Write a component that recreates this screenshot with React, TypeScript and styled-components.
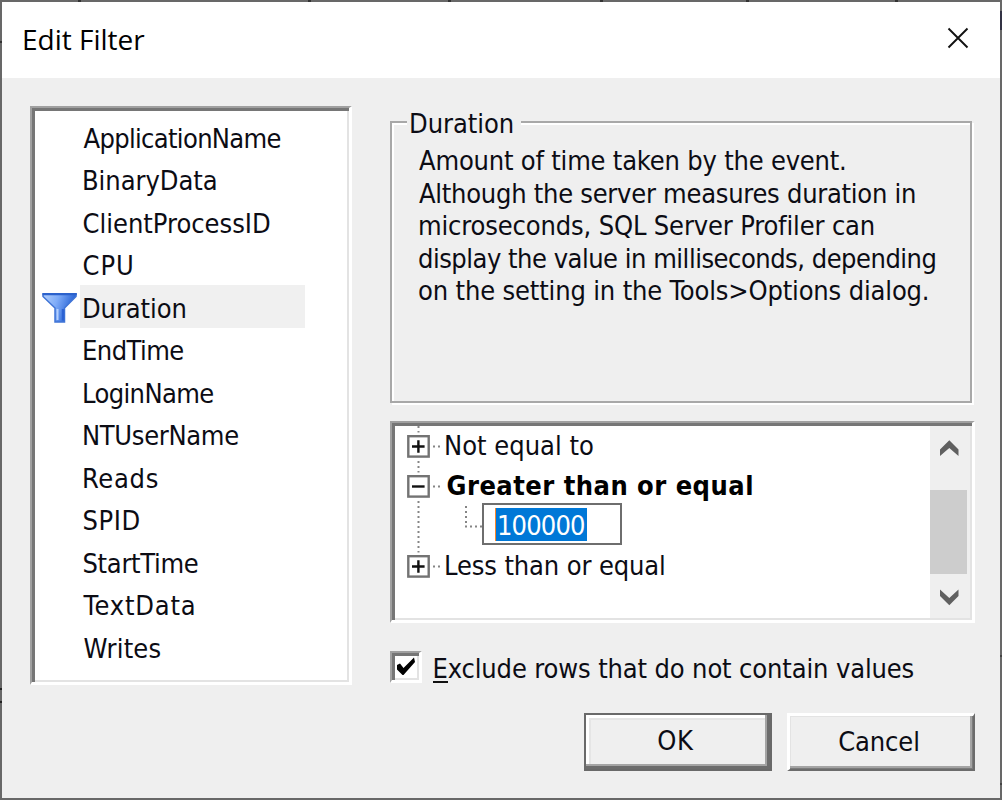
import React from "react";
import styled, { createGlobalStyle } from "styled-components";

const uiFont = '"DejaVu Sans Condensed", "DejaVu Sans", sans-serif';
const face = "#efefef";

const GlobalStyle = createGlobalStyle`
  * { box-sizing: border-box; }
  body { margin: 0; overflow: hidden; }
`;

const Backdrop = styled.div`
  width: 1002px;
  height: 800px;
  padding: 2px;
  background:
    linear-gradient(#333, #333) 78px 0 / 3px 2px no-repeat,
    linear-gradient(#333, #333) 308px 0 / 3px 2px no-repeat,
    linear-gradient(#333, #333) 448px 0 / 3px 2px no-repeat,
    linear-gradient(#333, #333) 600px 0 / 3px 2px no-repeat,
    linear-gradient(#333, #333) 746px 0 / 3px 2px no-repeat,
    linear-gradient(#333, #333) 895px 0 / 3px 2px no-repeat,
    linear-gradient(#333, #333) 0 41px / 2px 2px no-repeat,
    linear-gradient(#222, #222) 0 688px / 2px 2px no-repeat,
    linear-gradient(#222, #222) 0 701px / 2px 2px no-repeat,
    linear-gradient(#334, #334) 1000px 11px / 2px 19px no-repeat,
    linear-gradient(#444, #444) 1000px 655px / 2px 2px no-repeat,
    linear-gradient(#444, #444) 1000px 783px / 2px 2px no-repeat,
    #686868;
`;

const Dialog = styled.div`
  display: flex;
  flex-direction: column;
  width: 998px;
  height: 796px;
  background: ${face};
  color: #0c0c14;
  font: 27px ${uiFont};
  white-space: nowrap;
`;

const TitleBar = styled.header`
  display: flex;
  justify-content: space-between;
  align-items: center;
  height: 76px;
  padding: 0 31px 0 20px;
  background: #fff;
`;

const Title = styled.h1`
  margin: 0;
  font: 400 28px/74px "Open Sans", sans-serif;
  height: 76px;
  color: #000;
`;

const CloseButton = styled.button`
  display: flex;
  width: 22px;
  height: 22px;
  margin-bottom: 4px;
  padding: 0;
  border: 0;
  background: none;
`;

const Body = styled.div`
  display: flex;
  gap: 38px;
  padding: 28px 0 0 28px;
`;

const sunken = `
  border: solid;
  border-width: 2px 3px 3px 2px;
  border-color: #a0a0a0 #fff #fff #a0a0a0;
  box-shadow: inset 3px 3px 0 #767676, inset -2px -2px 0 #e3e3e3;
  background: #fff;
`;

const ListBox = styled.ul`
  ${sunken}
  width: 322px;
  height: 579px;
  margin: 0;
  padding: 7px 0 0 10px;
  list-style: none;
`;

const ListItem = styled.li`
  display: grid;
  grid-template-columns: 38px 225px;
  grid-template-rows: 42.5px;
  height: 42.5px;
`;

const IconCell = styled.span`
  padding-top: 7px;
`;

const ItemLabel = styled.span<{ $selected?: boolean; $indent: number; $tracking: number }>`
  height: 42.5px;
  padding: 2.7px 0 0 ${(p) => p.$indent}px;
  line-height: 41px;
  letter-spacing: ${(p) => p.$tracking}px;
  background: ${(p) => (p.$selected ? "#f0f0f0" : "transparent")};
`;

const Right = styled.div`
  display: flex;
  flex-direction: column;
  width: 585px;
`;

const Group = styled.section`
  display: flex;
  flex-direction: column;
  width: 582px;
  height: 282px;
  margin-top: 15px;
  border: 2px solid #a8a8a8;
  box-shadow: 2px 2px 0 #fff, inset 2px 2px 0 #fff;
`;

const Legend = styled.h2`
  align-self: flex-start;
  height: 32px;
  margin: -16px 0 0 15px;
  padding: 0 7px 0 2px;
  background: ${face};
  font: 400 27px/34px ${uiFont};
  letter-spacing: -0.05px;
`;

const Description = styled.p`
  margin: 6px 0 0 26px;
`;

const Line = styled.span<{ $indent?: number; $tracking: number }>`
  display: block;
  height: 32.5px;
  line-height: 32.5px;
  padding-left: ${(p) => p.$indent ?? 0}px;
  letter-spacing: ${(p) => p.$tracking}px;
`;

const TreeBox = styled.div`
  ${sunken}
  display: flex;
  justify-content: space-between;
  height: 202px;
  margin-top: 18px;
  padding: 3px 2px 2px 3px;
`;

const Tree = styled.div`
  display: flex;
  flex-direction: column;
`;

const TreeRow = styled.div`
  display: flex;
  height: 40px;
`;

const TreeLabel = styled.span<{ $bold?: boolean; $tracking?: number }>`
  line-height: 39px;
  padding-left: ${(p) => (p.$bold ? 2.5 : 0)}px;
  font-weight: ${(p) => (p.$bold ? 700 : 400)};
  letter-spacing: ${(p) => p.$tracking ?? 0}px;
  color: ${(p) => (p.$bold ? "#000" : "inherit")};
`;

const ValueField = styled.div`
  width: 140px;
  height: 42px;
  margin-top: -3px;
  padding: 3px 0 0 11px;
  border: 2px solid #6e6e6e;
  background: #fff;
`;

const SelectedText = styled.span`
  display: block;
  width: 92px;
  height: 33px;
  padding-left: 1px;
  border-left: 1px solid #ff8728;
  background: #0078d7;
  color: #fff;
  line-height: 36px;
  letter-spacing: -0.85px;
`;

const ScrollBar = styled.div`
  display: flex;
  flex-direction: column;
  width: 40px;
  background: ${face};
`;

const ScrollArrow = styled.div<{ $down?: boolean }>`
  display: flex;
  height: 44px;
  padding: ${(p) => (p.$down ? 15 : 14)}px 0 0 9.5px;
`;

const ScrollTrack = styled.div`
  height: 20.5px;
`;

const Thumb = styled.div`
  width: 37px;
  height: 85px;
  background: #cdcdcd;
`;

const CheckRow = styled.label`
  display: flex;
  margin-top: 28px;
  height: 32px;
`;

const CheckBox = styled.span`
  ${sunken}
  display: flex;
  flex-shrink: 0;
  width: 32px;
  height: 32px;
`;

const CheckLabel = styled.span`
  margin-left: 10.5px;
  line-height: 36px;
  letter-spacing: -0.13px;
`;

const Mnemonic = styled.span`
  display: inline-block;
  height: 32px;
  border-bottom: 2px solid #111;
`;

const Actions = styled.div`
  display: flex;
  justify-content: flex-end;
  gap: 15px;
  margin-top: 30px;
`;

const Button = styled.button<{ $primary?: boolean }>`
  width: 188px;
  height: 58px;
  padding: 0 5px 3px 0;
  font: 27px ${uiFont};
  letter-spacing: ${(p) => (p.$primary ? 0.8 : -0.1)}px;
  color: inherit;
  background: ${face};
  border: solid;
  border-width: ${(p) => (p.$primary ? "2px" : "3px 2px 2px 3px")};
  border-color: ${(p) => (p.$primary ? "#696969" : "#fff #6c6c6c #6c6c6c #fff")};
  box-shadow: ${(p) =>
    p.$primary
      ? "inset -3px -3px 0 #6c6c6c, inset -5px -5px 0 #a4a4a4, inset 3px 3px 0 #fff, inset 5px 5px 0 #e5e5e5"
      : "inset -1px -1px 0 #7c7c7c, inset -3px -3px 0 #a4a4a4, inset 1px 1px 0 #e3e3e3"};
`;

const FunnelIcon = () => (
  <svg width="36" height="32" viewBox="0 0 36 32">
    <defs>
      <linearGradient id="funnel" x1="0" x2="1" y1="0" y2="0.3">
        <stop offset="0" stopColor="#b4d0fb" />
        <stop offset="0.45" stopColor="#7facf8" />
        <stop offset="1" stopColor="#1f5cd2" />
      </linearGradient>
    </defs>
    <path d="M1 2H34V4.5L22.5 16V30H13V16L1 4.5Z" fill="url(#funnel)" stroke="#3f74d6" strokeWidth="1.5" />
    <path d="M0.5 2.2H34.8" stroke="#2c62cc" strokeWidth="2.2" />
    <path d="M15.5 17V28" stroke="#b5d0ff" strokeWidth="2" />
    <path d="M21 17V28.5" stroke="#2c62d3" strokeWidth="2.4" />
  </svg>
);

const Expander = ({ open, last }: { open?: boolean; last?: boolean }) => (
  <svg width="49" height="40" viewBox="0 0 49 40">
    <path d={last ? "M23.5 0V8" : "M23.5 0V40"} stroke="#858585" strokeWidth="2" strokeDasharray="2 3" />
    <path d="M38 20.5H45" stroke="#858585" strokeWidth="2" strokeDasharray="2 3" />
    <rect x="11" y="6.5" width="25" height="27" fill="#fff" />
    <rect x="13.3" y="10.2" width="20.4" height="20.4" fill="#fff" stroke="#737373" strokeWidth="2.4" />
    <path d={open ? "M17 20.5H29.6" : "M17 20.5H29.6M23.4 14.2V26.8"} stroke="#111" strokeWidth="2.4" />
  </svg>
);

const ChildBranch = () => (
  <svg width="87" height="40" viewBox="0 0 87 40">
    <path d="M23.5 0V40M71 0V21M70 20.5H87" fill="none" stroke="#858585" strokeWidth="2" strokeDasharray="2 3" />
  </svg>
);

const Chevron = ({ down }: { down?: boolean }) => (
  <svg width="19" height="17" viewBox="0 0 19 17">
    <path d={down ? "M0 .5L9.3 9 18.5 .5V7L9.3 16.3 0 7Z" : "M0 16L9.3 8 18.5 16V9.5L9.3 .3 0 9.5Z"} fill="#606060" />
  </svg>
);

const columns = [
  { name: "ApplicationName", indent: 3.5, tracking: -0.67 },
  { name: "BinaryData", indent: 2, tracking: -0.05 },
  { name: "ClientProcessID", indent: 2.5, tracking: 0 },
  { name: "CPU", indent: 2.5, tracking: 1 },
  { name: "Duration", indent: 2, tracking: -0.1, selected: true },
  { name: "EndTime", indent: 2, tracking: -0.55 },
  { name: "LoginName", indent: 2, tracking: -0.62 },
  { name: "NTUserName", indent: 2, tracking: -0.32 },
  { name: "Reads", indent: 2, tracking: 0.7 },
  { name: "SPID", indent: 2.5, tracking: 0.6 },
  { name: "StartTime", indent: 2.5, tracking: -0.3 },
  { name: "TextData", indent: 3.5, tracking: 0.8 },
  { name: "Writes", indent: 3.5, tracking: 0.2 },
];

const description = [
  { text: "Amount of time taken by the event.", indent: 1, tracking: -0.2 },
  { text: "Although the server measures duration in", indent: 1, tracking: -0.26 },
  { text: "microseconds, SQL Server Profiler can", indent: 0, tracking: -0.15 },
  { text: "display the value in milliseconds, depending", indent: 0, tracking: -0.49 },
  { text: "on the setting in the Tools>Options dialog.", indent: 0, tracking: -0.15 },
];

export default function App() {
  return (
    <Backdrop>
      <GlobalStyle />
      <Dialog>
        <TitleBar>
          <Title>Edit Filter</Title>
          <CloseButton aria-label="Close">
            <svg width="22" height="22" viewBox="0 0 22 22">
              <path d="M1.5 1.5L20.5 20.5M20.5 1.5L1.5 20.5" stroke="#111" strokeWidth="1.9" />
            </svg>
          </CloseButton>
        </TitleBar>
        <Body>
          <ListBox>
            {columns.map((c) => (
              <ListItem key={c.name}>
                <IconCell>{c.selected && <FunnelIcon />}</IconCell>
                <ItemLabel $selected={c.selected} $indent={c.indent} $tracking={c.tracking}>
                  {c.name}
                </ItemLabel>
              </ListItem>
            ))}
          </ListBox>
          <Right>
            <Group>
              <Legend>Duration</Legend>
              <Description>
                {description.map((l) => (
                  <Line key={l.text} $indent={l.indent} $tracking={l.tracking}>
                    {l.text}
                  </Line>
                ))}
              </Description>
            </Group>
            <TreeBox>
              <Tree>
                <TreeRow>
                  <Expander />
                  <TreeLabel>Not equal to</TreeLabel>
                </TreeRow>
                <TreeRow>
                  <Expander open />
                  <TreeLabel $bold $tracking={0.48}>
                    Greater than or equal
                  </TreeLabel>
                </TreeRow>
                <TreeRow>
                  <ChildBranch />
                  <ValueField>
                    <SelectedText>100000</SelectedText>
                  </ValueField>
                </TreeRow>
                <TreeRow>
                  <Expander last />
                  <TreeLabel $tracking={-0.12}>Less than or equal</TreeLabel>
                </TreeRow>
              </Tree>
              <ScrollBar>
                <ScrollArrow>
                  <Chevron />
                </ScrollArrow>
                <ScrollTrack />
                <Thumb />
                <ScrollArrow $down>
                  <Chevron down />
                </ScrollArrow>
              </ScrollBar>
            </TreeBox>
            <CheckRow>
              <CheckBox>
                <svg width="27" height="27" viewBox="0 0 27 27">
                  <path d="M5 12L8 10.5 11.5 15 22 4.5 23 9 11.5 22 10.5 22 5 16.5Z" fill="#000" />
                </svg>
              </CheckBox>
              <CheckLabel>
                <Mnemonic>E</Mnemonic>xclude rows that do not contain values
              </CheckLabel>
            </CheckRow>
            <Actions>
              <Button $primary>OK</Button>
              <Button>Cancel</Button>
            </Actions>
          </Right>
        </Body>
      </Dialog>
    </Backdrop>
  );
}
